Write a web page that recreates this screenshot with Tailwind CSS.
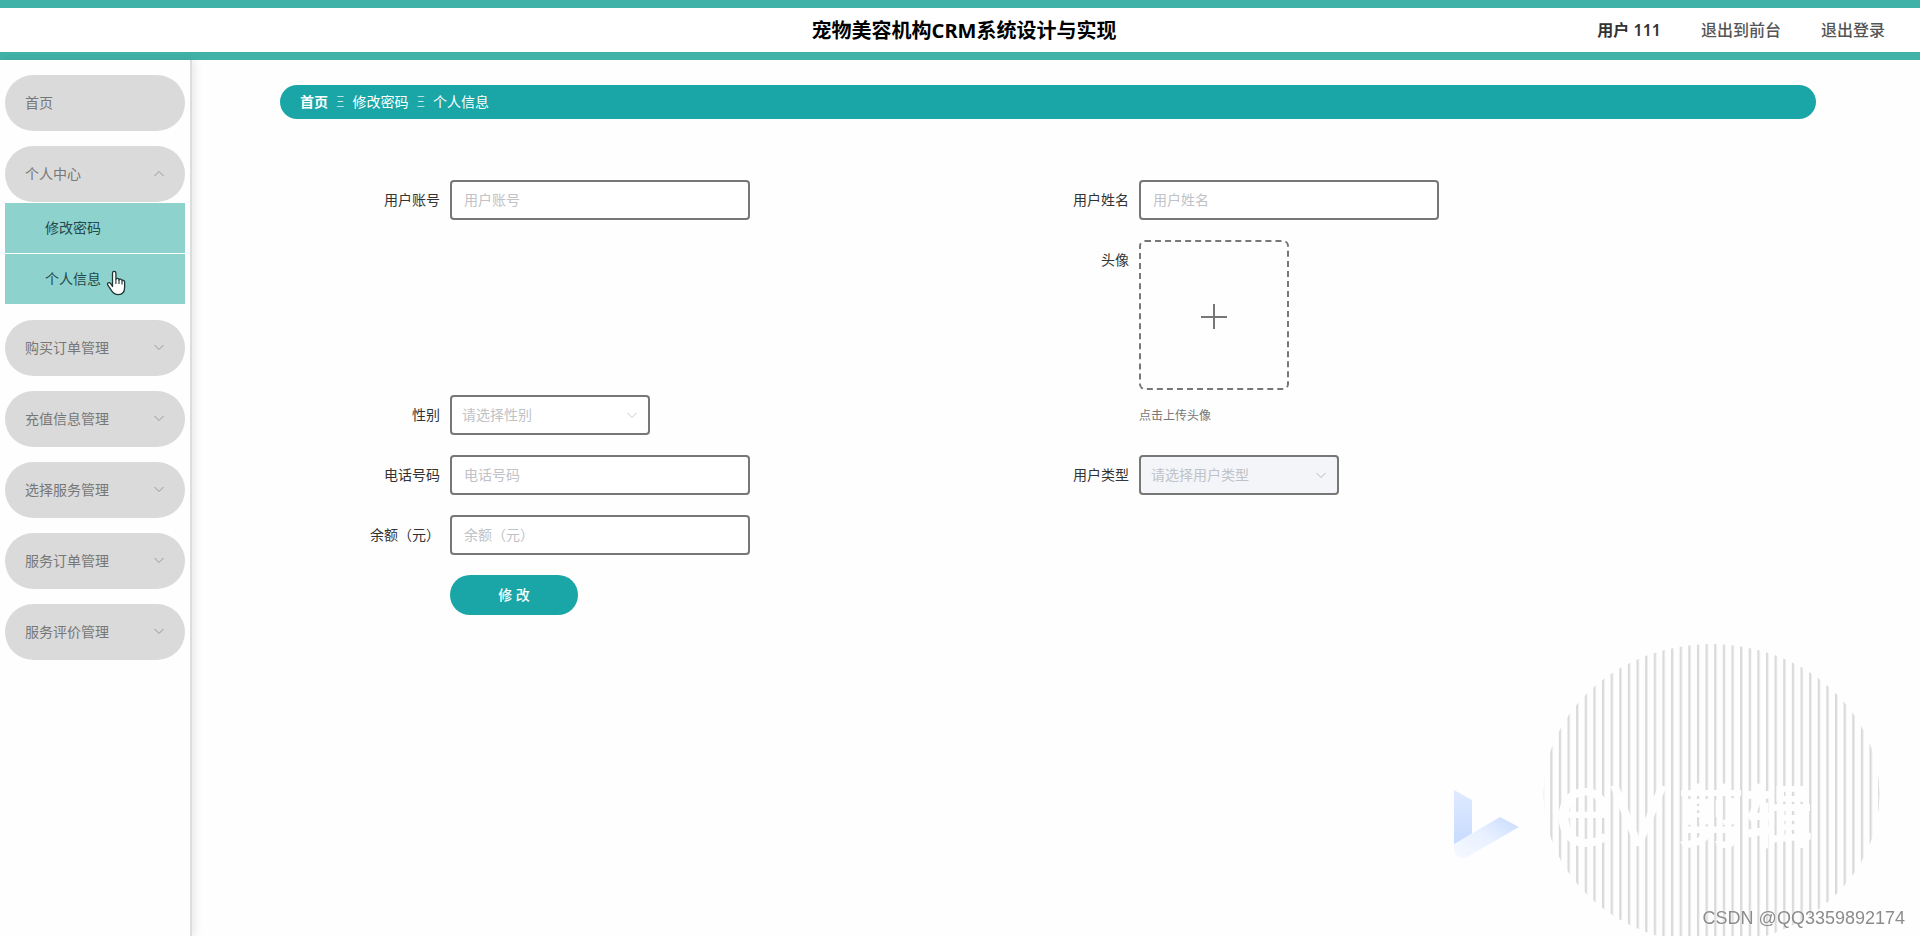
<!DOCTYPE html>
<html lang="zh-CN">
<head>
<meta charset="utf-8">
<title>宠物美容机构CRM系统设计与实现</title>
<script src="https://cdn.jsdelivr.net/npm/@tailwindcss/browser@4"></script>
</head>
<body class="min-h-screen flex flex-col overflow-hidden bg-[#fefefe] text-sm text-[#333] font-['Noto_Sans','Noto_Sans_CJK_SC',sans-serif]">
<svg class="hidden" aria-hidden="true">
  <symbol id="down" viewBox="0 0 12 12"><path d="M1.5 3 L6 7.5 L10.5 3" fill="none" stroke="currentColor"/></symbol>
  <symbol id="up" viewBox="0 0 12 12"><path d="M1.5 8 L6 3.5 L10.5 8" fill="none" stroke="currentColor"/></symbol>
</svg>

<header class="grid h-[60px] shrink-0 grid-cols-[1fr_auto_1fr] items-center border-y-8 border-[#40b2a8] bg-white">
  <h1 class="col-start-2 pl-2 pt-0.5 text-xl font-bold text-black">宠物美容机构CRM系统设计与实现</h1>
  <div class="flex justify-end gap-10 pr-[35px] text-base font-medium text-[#555]">
    <span class="font-semibold text-[#333]">用户 111</span>
    <a href="#front">退出到前台</a>
    <a href="#logout">退出登录</a>
  </div>
</header>

<div class="flex flex-1">
  <aside class="w-48 shrink-0 border-r-2 border-[#ddd] shadow-[3px_0_8px_rgba(0,0,0,0.09)]">
    <nav class="relative flex flex-col gap-[15px] px-[5px] pt-[15px] text-[#777]">
      <a href="#home" class="flex h-14 items-center rounded-full bg-[#dadada] px-5">首页</a>
      <div>
        <button type="button" class="flex h-14 w-full items-center justify-between rounded-full bg-[#dadada] px-5">个人中心<svg class="h-3 w-3 text-[#999]"><use href="#up"/></svg></button>
        <div class="mt-px mb-px flex flex-col gap-px text-[#24494a]">
          <a href="#password" class="flex h-[50px] items-center bg-[#8dd2cd] px-10">修改密码</a>
          <a href="#profile" class="flex h-[50px] items-center bg-[#8dd2cd] px-10">个人信息</a>
        </div>
      </div>
      <button type="button" class="flex h-14 items-center justify-between rounded-full bg-[#dadada] px-5">购买订单管理<svg class="h-3 w-3 text-[#999]"><use href="#down"/></svg></button>
      <button type="button" class="flex h-14 items-center justify-between rounded-full bg-[#dadada] px-5">充值信息管理<svg class="h-3 w-3 text-[#999]"><use href="#down"/></svg></button>
      <button type="button" class="flex h-14 items-center justify-between rounded-full bg-[#dadada] px-5">选择服务管理<svg class="h-3 w-3 text-[#999]"><use href="#down"/></svg></button>
      <button type="button" class="flex h-14 items-center justify-between rounded-full bg-[#dadada] px-5">服务订单管理<svg class="h-3 w-3 text-[#999]"><use href="#down"/></svg></button>
      <button type="button" class="flex h-14 items-center justify-between rounded-full bg-[#dadada] px-5">服务评价管理<svg class="h-3 w-3 text-[#999]"><use href="#down"/></svg></button>
      <svg class="pointer-events-none absolute left-[106px] top-[210px] h-[26px] w-5" viewBox="0 0 20 26" aria-hidden="true">
        <path d="M6.5 16.5 V3.2 C6.5 0.8 9.9 0.8 9.9 3.2 V9.6 C9.9 8 13 8 13 10 C13 8.7 16 8.8 16 10.8 C16 9.8 18.6 10 18.6 12 V17.5 C18.6 22 16.5 24.6 12.3 24.6 C8.8 24.6 7.4 23.5 5.7 20.8 L1.7 14.8 C0.8 13 3.2 11.8 4.7 13.7 Z" fill="#fff" stroke="#1f3636" stroke-width="1.3" stroke-linejoin="round"/>
        <path d="M9.9 9.5 V14 M13 10 V14 M16 11 V14.5" fill="none" stroke="#1f3636" stroke-width="1.1"/>
      </svg>
    </nav>
  </aside>

  <main class="min-w-0 flex-1 pl-[88px] pr-[104px] pt-[25px]">
    <nav class="flex h-[34px] items-center gap-2 rounded-full bg-[#1aa6a6] px-5 text-white" aria-label="面包屑">
      <a href="#home" class="font-bold">首页</a>
      <span class="font-light text-white/80">Ξ</span>
      <a href="#password">修改密码</a>
      <span class="font-light text-white/80">Ξ</span>
      <a href="#profile">个人信息</a>
    </nav>

    <form class="mt-[61px] grid grid-cols-2 gap-y-5 pl-[70px] pr-[88px]">
      <div class="flex items-center">
        <label for="account" class="w-[100px] pr-[10px] text-right">用户账号</label>
        <input id="account" placeholder="用户账号" class="h-10 w-[300px] rounded border-2 border-[#777] bg-white px-3 pb-0.5 placeholder:text-[#bfc2c7]">
      </div>
      <div class="flex items-center">
        <label for="name" class="w-[100px] pr-[10px] text-right">用户姓名</label>
        <input id="name" placeholder="用户姓名" class="h-10 w-[300px] rounded border-2 border-[#777] bg-white px-3 pb-0.5 placeholder:text-[#bfc2c7]">
      </div>

      <div class="flex items-center self-end">
        <label for="gender" class="w-[100px] pr-[10px] text-right">性别</label>
        <div class="relative">
          <select id="gender" class="h-10 w-[200px] appearance-none rounded border-2 border-[#777] bg-white px-[10px] text-[#bfc2c7]"><option>请选择性别</option></select>
          <svg class="pointer-events-none absolute right-3 top-[15px] h-3 w-3 text-[#c8cbd0]"><use href="#down"/></svg>
        </div>
      </div>
      <div class="flex">
        <label for="avatar" class="w-[100px] pr-[10px] text-right leading-10">头像</label>
        <div>
          <button id="avatar" type="button" aria-label="上传头像" class="flex h-[150px] w-[150px] items-center justify-center rounded-md border-2 border-dashed border-[#777]">
            <svg class="h-7 w-[26px]" viewBox="0 0 26 28"><path d="M0 16 H26 M13 3 V28" stroke="#777" stroke-width="2"/></svg>
          </button>
          <p class="mt-[6px] -mb-px text-xs leading-10 text-[#777]">点击上传头像</p>
        </div>
      </div>

      <div class="flex items-center">
        <label for="phone" class="w-[100px] pr-[10px] text-right">电话号码</label>
        <input id="phone" placeholder="电话号码" class="h-10 w-[300px] rounded border-2 border-[#777] bg-white px-3 pb-0.5 placeholder:text-[#bfc2c7]">
      </div>
      <div class="flex items-center">
        <label for="type" class="w-[100px] pr-[10px] text-right">用户类型</label>
        <div class="relative">
          <select id="type" disabled class="h-10 w-[200px] appearance-none rounded border-2 border-[#777] bg-[#f3f5f9] px-[10px] text-[#bfc2c7] opacity-100"><option>请选择用户类型</option></select>
          <svg class="pointer-events-none absolute right-3 top-[15px] h-3 w-3 text-[#b8bbc0]"><use href="#down"/></svg>
        </div>
      </div>

      <div class="col-span-2 flex items-center">
        <label for="balance" class="w-[100px] pr-[10px] text-right">余额（元）</label>
        <input id="balance" placeholder="余额（元）" class="h-10 w-[300px] rounded border-2 border-[#777] bg-white px-3 pb-0.5 placeholder:text-[#bfc2c7]">
      </div>
      <div class="col-span-2 pl-[100px]">
        <button type="submit" class="h-10 w-32 rounded-full bg-[#1aa6a6] font-medium text-white">修 改</button>
      </div>
    </form>
  </main>
</div>

<div class="pointer-events-none fixed bottom-0 right-0">
  <svg class="block h-[306px] w-[480px]" viewBox="0 0 480 306">
    <defs>
      <pattern id="stripes" x="110.2" y="0" width="8.63" height="10" patternUnits="userSpaceOnUse"><rect width="2.3" height="10" fill="#dadada"/></pattern>
      <linearGradient id="upright" x1="0" y1="0" x2="0" y2="1"><stop offset="0" stop-color="#e0eaff"/><stop offset="1" stop-color="#c6dbff"/></linearGradient>
      <linearGradient id="arm" x1="0" y1="1" x2="1" y2="0"><stop offset="0" stop-color="#f6f9ff"/><stop offset=".5" stop-color="#e9f1ff"/><stop offset="1" stop-color="#c6dafd"/></linearGradient>
    </defs>
    <ellipse cx="271.5" cy="164" rx="168" ry="150" fill="url(#stripes)"/>
    <path d="M14 160 L32 170 V204 L14 216 Z" fill="url(#upright)"/>
    <path d="M14 214 L60 187 L79 197 L27 227 Q14 230 14 218 Z" fill="url(#arm)"/>
    <g fill="#fefefe">
      <text x="114" y="216" font-size="112" font-weight="400" font-family="Lato, sans-serif">e</text>
      <text x="170" y="216" font-size="84" font-weight="400" font-family="Lato, sans-serif">V</text>
      <text x="237" y="212" font-size="68" font-weight="700" font-family="Noto Sans CJK SC, sans-serif">剪辑</text>
    </g>
  </svg>
  <span class="absolute bottom-[6px] right-[15px] font-['Liberation_Sans',sans-serif] text-lg leading-6 text-[#8c8c8c] [text-shadow:0_0_2px_white]">CSDN @QQ3359892174</span>
</div>
</body>
</html>
